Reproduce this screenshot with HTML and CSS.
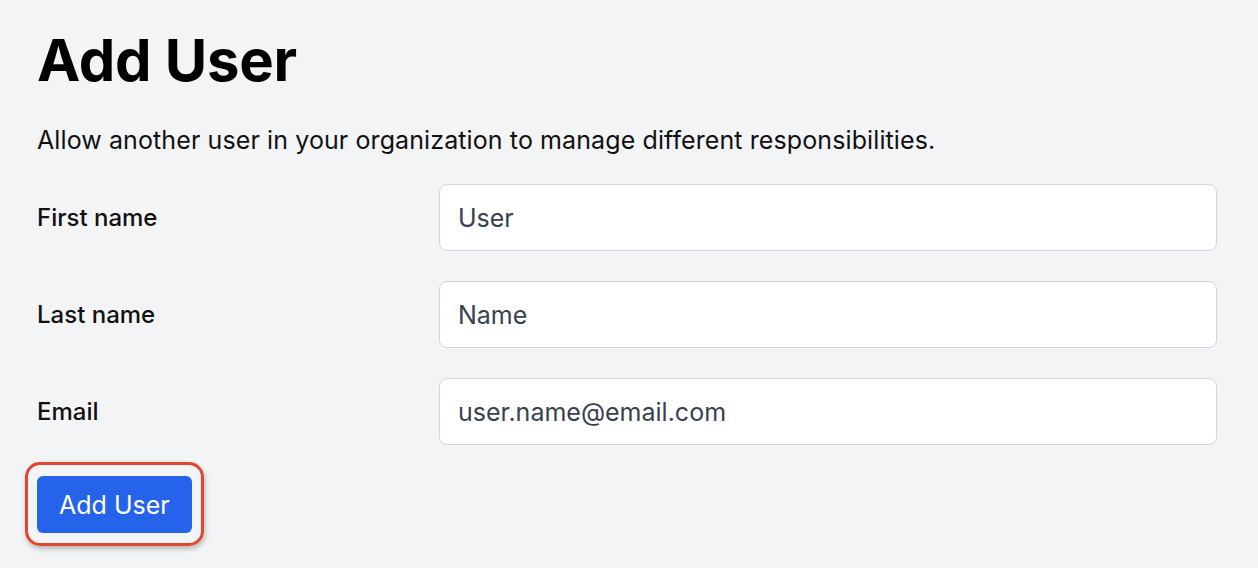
FILE: index.html
```html
<!DOCTYPE html>
<html lang="en">
<head>
    <meta charset="UTF-8">
    <title>Add User</title>
    <link rel="stylesheet" href="styles.css">
</head>
<body>
<div class="page">
    <h1 class="title">Add User</h1>
    <p class="intro">Allow another user in your organization to manage different responsibilities.</p>
    <form class="user-form">
        <div class="row">
            <label class="label" for="first">First name</label>
            <input class="field" id="first" type="text" value="User">
        </div>
        <div class="row">
            <label class="label" for="last">Last name</label>
            <input class="field" id="last" type="text" value="Name">
        </div>
        <div class="row">
            <label class="label" for="email">Email</label>
            <input class="field" id="email" type="text" value="user.name@email.com">
        </div>
        <div class="actions">
            <span class="highlight">
                <button class="btn" type="button">Add User</button>
            </span>
        </div>
    </form>
</div>
</body>
</html>
```

FILE: styles.css
```css
html, body {
    min-height: 100%;
}

body {
    margin: 0;
    background-color: #f3f4f6;
    font-family: Inter, "Noto Sans", sans-serif;
    color: #111111;
}

.page {
    width: 1180px;
    padding: 24px 0 30px 37px;
}

.title {
    margin: 0;
    font-size: 58px;
    line-height: 72px;
    font-weight: 700;
    color: #000000;
    letter-spacing: -0.25px;
}

.intro {
    margin: 28px 0 0;
    font-size: 25px;
    line-height: 32px;
    color: #111111;
    letter-spacing: 0.1px;
}

.user-form {
    margin-top: 28px;
    display: flex;
    flex-direction: column;
    gap: 30px;
}

.row {
    display: grid;
    grid-template-columns: 378px 1fr;
    column-gap: 24px;
    align-items: center;
}

.label {
    font-size: 24px;
    font-weight: 500;
    color: #111111;
}

.field {
    box-sizing: border-box;
    width: 100%;
    height: 67px;
    padding: 0 18px;
    background: #ffffff;
    border: 1px solid #d1d5db;
    border-radius: 8px;
    font-family: inherit;
    font-size: 25px;
    color: #374151;
    outline: none;
}

.actions {
    padding-top: 1px;
}

.highlight {
    position: relative;
    display: inline-block;
}

/* annotation ring drawn over the button */
.highlight::after {
    content: "";
    position: absolute;
    top: -14px;
    right: -12px;
    bottom: -13px;
    left: -12px;
    border: 3px solid #e5452e;
    border-radius: 15px;
    box-shadow: 1px 3px 5px rgba(0, 0, 0, 0.25);
    pointer-events: none;
}

.btn {
    display: block;
    height: 57px;
    padding: 0 22px;
    border: none;
    border-radius: 6px;
    background-color: #2563eb;
    color: #ffffff;
    font-family: inherit;
    font-size: 25px;
    cursor: pointer;
}
```
